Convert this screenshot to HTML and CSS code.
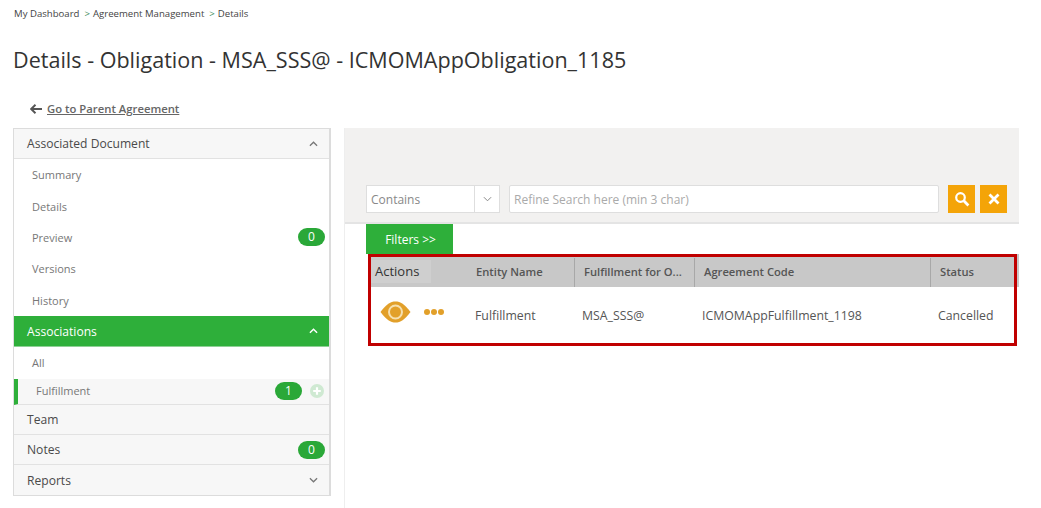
FILE: index.html
```html
<!DOCTYPE html>
<html lang="en">
<head>
<meta charset="utf-8">
<title>Details</title>
<link rel="stylesheet" href="styles.css">
</head>
<body>
<nav class="crumbs"><span>My Dashboard</span><i>&gt;</i><span>Agreement Management</span><i>&gt;</i><span>Details</span></nav>
<h1 class="title">Details - Obligation - MSA_SSS@ - ICMOMAppObligation_1185</h1>
<a class="back" href="#"><svg class="back-icon" viewBox="0 0 12 10" width="12" height="10"><path d="M5.5 0.8 1.200 5l4.300 4.200M1.500 5H12" fill="none" stroke="#555" stroke-width="1.9"/></svg><span>Go to Parent Agreement</span></a>
<div class="main">
  <aside class="side">
    <div class="head first">Associated Document<svg class="chev" viewBox="0 0 10 6" width="9" height="6"><path d="M1 5l4-4 4 4" fill="none" stroke="#777" stroke-width="1.4"/></svg></div>
    <ul class="items">
      <li>Summary</li>
      <li>Details</li>
      <li>Preview<b class="pill">0</b></li>
      <li>Versions</li>
      <li>History</li>
    </ul>
    <div class="head active">Associations<svg class="chev" viewBox="0 0 10 6" width="9" height="6"><path d="M1 5l4-4 4 4" fill="none" stroke="#fff" stroke-width="1.6"/></svg></div>
    <div class="sub-all">All</div>
    <div class="sub-sel">Fulfillment<b class="pill pill-near">1</b><svg class="plus" viewBox="0 0 14 14" width="14" height="14"><circle cx="7" cy="7" r="7" fill="#cfe9d2"/><path d="M7 3.200v7.600M3.200 7h7.600" stroke="#fff" stroke-width="2.200"/></svg></div>
    <div class="head">Team</div>
    <div class="head">Notes<b class="pill">0</b></div>
    <div class="head last">Reports<svg class="chev" viewBox="0 0 10 6" width="9" height="6"><path d="M1 1l4 4 4-4" fill="none" stroke="#777" stroke-width="1.4"/></svg></div>
  </aside>
  <section class="content">
    <div class="search">
      <div class="select"><span class="sel-text">Contains</span><span class="sel-arrow"><svg viewBox="0 0 10 6" width="9" height="6"><path d="M1 1l4 4 4-4" fill="none" stroke="#888" stroke-width="1.1"/></svg></span></div>
      <div class="input">Refine Search here (min 3 char)</div>
      <button class="btn"><svg viewBox="0 0 16 16" width="16" height="16"><circle cx="6.500" cy="6.500" r="4.300" fill="none" stroke="#fff" stroke-width="2.200"/><path d="M9.800 9.800l4.600 4.600" stroke="#fff" stroke-width="2.800"/></svg></button>
      <button class="btn btn-x"><svg viewBox="0 0 12 12" width="12" height="12"><path d="M1.500 1.500l9 9M10.500 1.500l-9 9" stroke="#fff" stroke-width="2.800"/></svg></button>
    </div>
    <button class="filters">Filters &gt;&gt;</button>
    <div class="grid">
      <div class="row row-head">
        <div class="c c1"><span class="actions">Actions</span></div>
        <div class="c c2">Entity Name</div>
        <div class="c c3">Fulfillment for O...</div>
        <div class="c c4">Agreement Code</div>
        <div class="c c5">Status</div>
      </div>
      <div class="row row-body">
        <div class="c c1">
          <svg class="eye" viewBox="0 0 30 22" width="31" height="22"><path d="M0 11C6 3 10 .5 15 .5S24 3 30 11c-6 8-10 10.500-15 10.500S6 19 0 11z" fill="#e2a02a"/><circle cx="15" cy="11" r="6.500" fill="none" stroke="#f6e0b0" stroke-width="2"/></svg>
          <span class="dots"><i></i><i></i><i></i></span>
        </div>
        <div class="c c2">Fulfillment</div>
        <div class="c c3">MSA_SSS@</div>
        <div class="c c4">ICMOMAppFulfillment_1198</div>
        <div class="c c5">Cancelled</div>
      </div>
      <div class="redbox"></div>
    </div>
  </section>
</div>
</body>
</html>
```
FILE: styles.css
```css
* { box-sizing: border-box; }
html, body { margin: 0; padding: 0; }
body {
  width: 1041px;
  height: 508px;
  overflow: hidden;
  background: #fff;
  font-family: "Open Sans", "Noto Sans", sans-serif;
  color: #444;
  padding-left: 13px;
}
.crumbs {
  display: flex;
  height: 27px;
  align-items: center;
  font-size: 9.600px;
  color: #444;
  padding-left: 1px;
}
.crumbs i { font-style: normal; color: #3a8a5a; margin: 0 3px 0 5px; }
.title {
  margin: 0;
  height: 63px;
  padding-top: 18px;
  font-size: 21.550px;
  line-height: 30px;
  font-weight: 400;
  color: #333;
}
.back {
  display: flex;
  align-items: center;
  height: 38px;
  padding: 0 0 1px 17px;
  font-size: 11.300px;
  font-weight: 600;
  color: #666;
  text-decoration: none;
}
.back span { text-decoration: underline; margin-left: 5px; }
.main { display: flex; align-items: flex-start; height: 380px; }
.side {
  width: 318px;
  height: 368px;
  border: 1px solid #dcdcdc;
  border-right-width: 2px;
  border-bottom-width: 2px;
  flex: none;
}
.head {
  display: flex;
  align-items: center;
  justify-content: space-between;
  height: 30px;
  padding: 0 11px 0 13px;
  background: #f7f7f7;
  border-bottom: 1px solid #e2e2e2;
  font-size: 12.100px;
  color: #4a4a4a;
}
.head.last { border-bottom: 0; }
.head.active { background: #2eaf3a; color: #fff; border-bottom: 1px solid #8fd096; height: 31px; }
.items { list-style: none; margin: 0; padding: 0; height: 157px; }
.items li {
  display: flex;
  align-items: center;
  justify-content: space-between;
  height: 31.400px;
  padding: 0 4px 0 18px;
  font-size: 11px;
  color: #777;
}
.pill {
  display: block;
  width: 27px;
  height: 18px;
  border-radius: 9px;
  background: #2aa838;
  color: #fff;
  text-align: center;
  font-size: 12px;
  line-height: 18px;
  font-weight: 400;
}
.head .pill { margin-right: -7px; }
.sub-all {
  height: 32px;
  padding: 9px 0 0 18px;
  font-size: 11px;
  line-height: 14px;
  color: #777;
}
.sub-sel {
  display: flex;
  align-items: center;
  height: 26px;
  padding: 0 5px 2px 18px;
  border-left: 4px solid #2eaf3a;
  border-bottom: 1px solid #e2e2e2;
  background: #f7f7f7;
  font-size: 11px;
  color: #777;
}
.pill-near { margin-left: auto; margin-right: 8px; }
.plus { flex: none; }
.content {
  width: 675px;
  height: 380px;
  margin-left: 13px;
  border-left: 1px solid #eee;
  flex: none;
}
.search {
  display: flex;
  align-items: flex-start;
  height: 96px;
  padding: 57px 0 0 21px;
  background: #f2f1f0;
  border-bottom: 2px solid #e4e4e4;
}
.select {
  display: flex;
  width: 134px;
  height: 28px;
  background: #fff;
  border: 1px solid #dedede;
  font-size: 12px;
  line-height: 28px;
  color: #888;
}
.sel-text { flex: 1; padding-left: 4px; }
.sel-arrow {
  display: flex;
  align-items: center;
  justify-content: center;
  width: 25px;
  border-left: 1px solid #dedede;
}
.input {
  width: 430px;
  height: 28px;
  margin: 0 9px 0 9px;
  padding-left: 4px;
  background: #fff;
  border: 1px solid #dedede;
  border-radius: 2px;
  font-size: 12px;
  line-height: 28px;
  color: #aaa;
}
.btn {
  display: flex;
  align-items: center;
  justify-content: center;
  width: 27px;
  height: 28px;
  padding: 0;
  border: 0;
  background: #f4a408;
}
.btn-x { margin-left: 5px; }
.filters {
  display: block;
  width: 87px;
  height: 30px;
  margin-left: 21px;
  padding: 1px 0 0 2px;
  border: 0;
  background: #2eaf3a;
  color: #fff;
  font-family: inherit;
  font-size: 12px;
}
.grid { position: relative; margin-left: 23px; width: 651px; height: 92px; }
.row { display: flex; }
.row-head {
  height: 33px;
  padding-top: 4px;
  background: #c8c8c8;
  font-size: 11.200px;
  font-weight: 600;
  color: #555;
}
.row-head .c { height: 29px; padding-bottom: 3px; border-right: 1px solid #a8a8a8; }
.row-head .c1, .row-head .c5 { border-right: 0; }
.row-body { height: 59px; padding-bottom: 2px; font-size: 12.300px; color: #555; }
.c { display: flex; align-items: center; flex: none; }
.c1 { width: 98px; padding-left: 7px; }
.c2 { width: 109px; padding-left: 10px; }
.c3 { width: 120px; padding-left: 9px; }
.c4 { width: 236px; padding-left: 9px; }
.c5 { width: 88px; padding-left: 9px; }
.row-body .c2 { padding-left: 9px; }
.row-body .c3 { padding-left: 7px; }
.row-body .c4 { padding-left: 7px; }
.row-body .c5 { padding-left: 7px; }
.actions {
  color: #333;
  background: #cfcfcf;
  width: 60px;
  margin-left: -4px;
  padding: 5px 0 5px 4px;
  font-size: 13px;
  font-weight: 500;
  line-height: 13px;
}
.eye { margin: -8px 0 0 5px; flex: none; }
.dots { display: flex; gap: 1px; margin: -8px 0 0 13px; }
.dots i { width: 6px; height: 6px; border-radius: 50%; background: #e2a02a; }
.redbox {
  position: absolute;
  left: 0;
  top: 0;
  width: 649px;
  height: 92px;
  border: 3px solid #c00000;
}
```
